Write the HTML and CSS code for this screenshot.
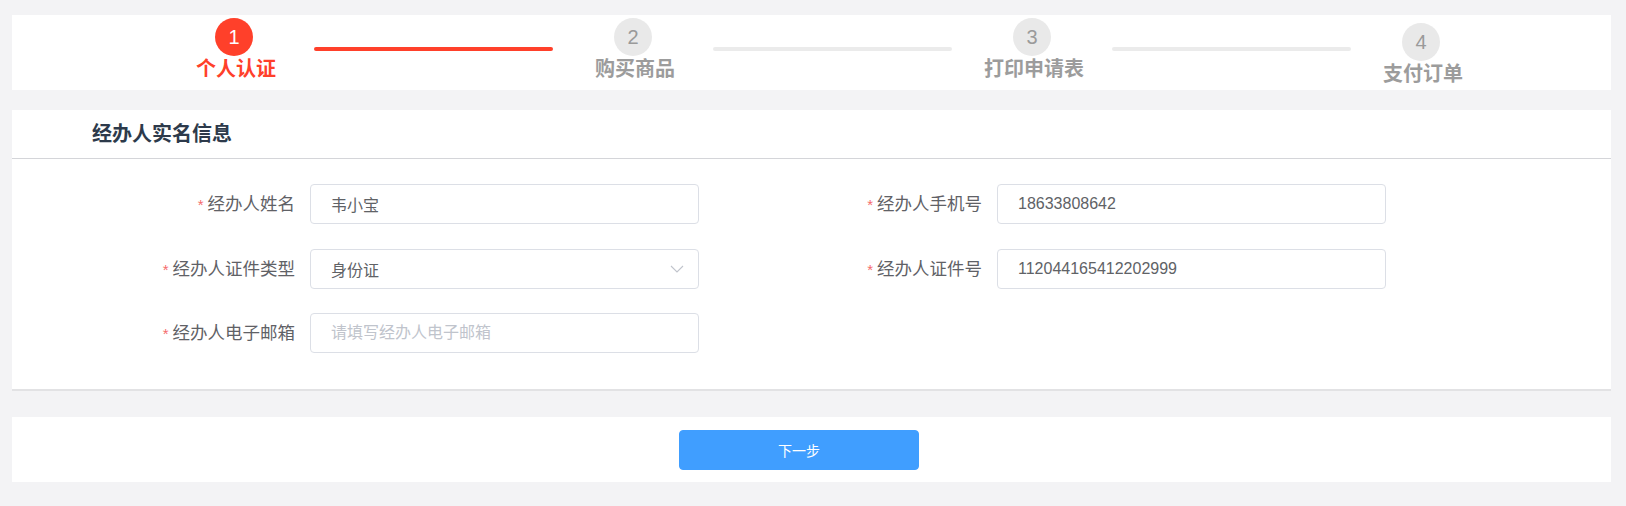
FILE: index.html
```html
<!DOCTYPE html>
<html lang="zh-CN">
<head>
    <meta charset="UTF-8">
    <meta name="viewport" content="width=device-width, initial-scale=1.0">
    <title>个人认证</title>
    <link rel="stylesheet" href="styles.css">
</head>
<body>
    <div class="page">
        <!-- 步骤条 -->
        <div class="steps-panel">
            <div class="step active">
                <span class="step-num">1</span>
                <span class="step-title">个人认证</span>
            </div>
            <div class="step-line active"></div>
            <div class="step">
                <span class="step-num">2</span>
                <span class="step-title">购买商品</span>
            </div>
            <div class="step-line"></div>
            <div class="step">
                <span class="step-num">3</span>
                <span class="step-title">打印申请表</span>
            </div>
            <div class="step-line"></div>
            <div class="step step-last">
                <span class="step-num">4</span>
                <span class="step-title">支付订单</span>
            </div>
        </div>

        <!-- 经办人信息 -->
        <div class="card">
            <div class="card-header">经办人实名信息</div>
            <form class="form">
                <div class="form-item">
                    <label class="form-label"><i class="req">*</i>经办人姓名</label>
                    <input class="form-input" type="text" value="韦小宝">
                </div>
                <div class="form-item">
                    <label class="form-label"><i class="req">*</i>经办人手机号</label>
                    <input class="form-input" type="text" value="18633808642">
                </div>
                <div class="form-item">
                    <label class="form-label"><i class="req">*</i>经办人证件类型</label>
                    <div class="form-select">
                        <span>身份证</span>
                        <svg class="arrow" width="14" height="8" viewBox="0 0 14 8"><path d="M1 1l6 6 6-6" fill="none" stroke="#c0c4cc" stroke-width="1.1"/></svg>
                    </div>
                </div>
                <div class="form-item">
                    <label class="form-label"><i class="req">*</i>经办人证件号</label>
                    <input class="form-input" type="text" value="112044165412202999">
                </div>
                <div class="form-item">
                    <label class="form-label"><i class="req">*</i>经办人电子邮箱</label>
                    <input class="form-input" type="text" placeholder="请填写经办人电子邮箱">
                </div>
            </form>
        </div>

        <div class="footer-bar">
            <button class="btn-primary" type="button">下一步</button>
        </div>
    </div>
</body>
</html>
```

FILE: styles.css
```css
body {
    margin: 0;
    background: #f3f3f5;
    font-family: "Liberation Sans", "Noto Sans CJK SC", sans-serif;
}
.page {
    padding: 15px 15px 0 12px;
}

/* 步骤条 */
.steps-panel {
    display: flex;
    align-items: flex-start;
    height: 75px;
    padding-left: 142px;
    background: #fff;
}
.step {
    width: 160px;
    display: flex;
    flex-direction: column;
    align-items: center;
    padding-top: 3px;
}
.step-last {
    width: 140px;
    padding-top: 8px;
}
.step-num {
    width: 38px;
    height: 38px;
    border-radius: 50%;
    background: #e9e9e9;
    color: #9a9a9a;
    font-size: 20px;
    line-height: 38px;
    text-align: center;
}
.step-title {
    margin: 2px 0 0 4px;
    font-size: 20px;
    line-height: 22px;
    font-weight: bold;
    color: #9c9c9c;
    white-space: nowrap;
}
.step.active .step-num {
    background: #ff402a;
    color: #fff;
}
.step.active .step-title {
    color: #ff402a;
}
.step-line {
    width: 239px;
    height: 4px;
    margin-top: 32px;
    border-radius: 2px;
    background: #ebebeb;
}
.step-line.active {
    background: #ff402a;
}

/* 表单卡片 */
.card {
    margin-top: 20px;
    background: #fff;
    border-bottom: 2px solid #e2e2e4;
}
.card-header {
    height: 48px;
    line-height: 48px;
    padding-left: 80px;
    border-bottom: 1px solid #d4d5d9;
    font-size: 20px;
    font-weight: bold;
    color: #2d3a4b;
}
.form {
    display: grid;
    grid-template-columns: 687px 687px;
    grid-auto-rows: 40px;
    row-gap: 24.5px;
    padding: 25px 0 36px 138px;
}
.form-item {
    display: flex;
    align-items: center;
    height: 40px;
}
.form-label {
    display: block;
    width: 145px;
    height: 40px;
    padding-right: 15px;
    text-align: right;
    font-size: 17.5px;
    line-height: 40px;
    color: #5f6166;
    white-space: nowrap;
}
.req {
    font-style: normal;
    color: #f56c6c;
    font-size: 15px;
    line-height: 1;
    margin-right: 4px;
}
.form-input,
.form-select {
    box-sizing: border-box;
    width: 389px;
    height: 40px;
    padding: 0 20px;
    border: 1px solid #dcdfe6;
    border-radius: 4px;
    background: #fff;
    font-family: "Liberation Sans", "Noto Sans CJK SC", sans-serif;
    font-size: 16px;
    color: #606266;
    outline: none;
}
.form-input::placeholder {
    color: #c0c4cc;
}
.form-select {
    display: flex;
    align-items: center;
    justify-content: space-between;
    padding-right: 14px;
}

/* 底部按钮 */
.footer-bar {
    margin-top: 26px;
    height: 65px;
    display: flex;
    align-items: center;
    justify-content: center;
    padding-right: 25px;
    background: #fff;
}
.btn-primary {
    width: 240px;
    height: 40px;
    border: 1px solid #409eff;
    border-radius: 4px;
    background: #409eff;
    color: #fff;
    font-family: "Liberation Sans", "Noto Sans CJK SC", sans-serif;
    font-size: 14px;
    cursor: pointer;
}
```
